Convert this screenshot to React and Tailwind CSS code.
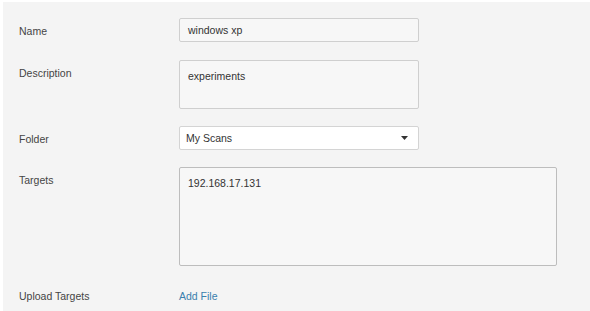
import React from 'react'

const font = { fontFamily: '"Liberation Sans", Arial, sans-serif' }

const Label = ({ children }) => (
  <div className="w-[160px] shrink-0 pt-px leading-[24px] text-[#444]">{children}</div>
)

export default function App() {
  return (
    <div className="w-[590px] h-[311px] bg-white overflow-hidden" style={font}>
      <div className="ml-[3px] mt-[2px] h-[309px] bg-[#f4f4f4] pl-[16px] pt-[16px] text-[10.5px] text-[#333]">
        {/* Name */}
        <div className="flex items-start">
          <Label>Name</Label>
          <div className="w-[240px] h-[24px] border border-[#cfcfcf] rounded-[2px] bg-[#f7f7f7] pl-[8px] leading-[22px]">
            windows xp
          </div>
        </div>

        {/* Description */}
        <div className="flex items-start mt-[17px]">
          <Label>Description</Label>
          <div className="w-[240px] h-[49px] border border-[#cfcfcf] rounded-[2px] bg-[#f7f7f7] pl-[8px] pt-[8px] leading-[14px]">
            experiments
          </div>
        </div>

        {/* Folder */}
        <div className="flex items-start mt-[17px]">
          <Label>Folder</Label>
          <div className="w-[240px] h-[24px] border border-[#d4d4d4] rounded-[2px] bg-white pl-[6px] pr-[10px] leading-[22px] flex items-center justify-between">
            <span>My Scans</span>
            <svg width="7" height="4" viewBox="0 0 7 4">
              <path d="M0 0h7L3.5 4z" fill="#333" />
            </svg>
          </div>
        </div>

        {/* Targets */}
        <div className="flex items-start mt-[16px]">
          <Label>Targets</Label>
          <div className="w-[378px] h-[99px] border border-[#bdbdbd] rounded-[2px] bg-[#f7f7f7] pl-[8px] pt-[8px] leading-[14px]">
            192.168.17.131
          </div>
        </div>

        {/* Upload */}
        <div className="flex items-center mt-[17px]">
          <Label>Upload Targets</Label>
          <span className="text-[#3a80ad] leading-[24px] pt-px">Add File</span>
        </div>
      </div>
    </div>
  )
}
